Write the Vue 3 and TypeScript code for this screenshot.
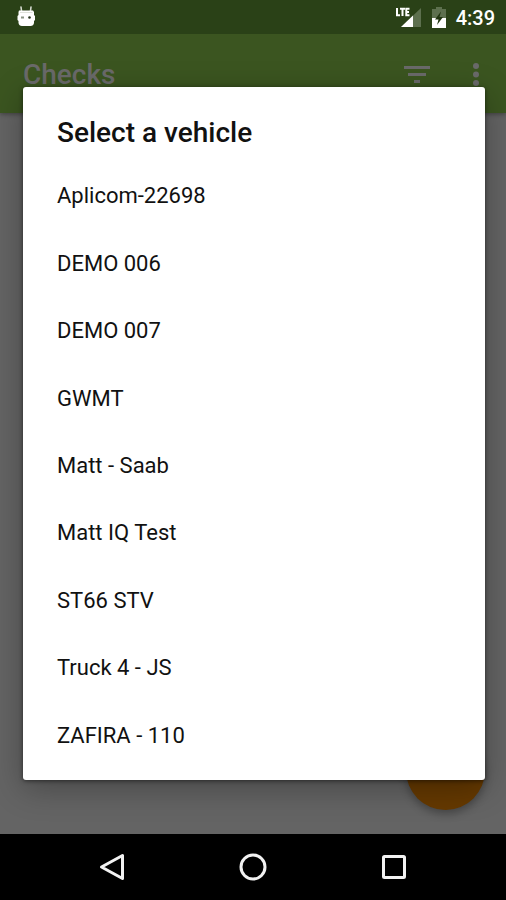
<script setup lang="ts">
import { ref } from 'vue'

const vehicles: string[] = [
  'Aplicom-22698',
  'DEMO 006',
  'DEMO 007',
  'GWMT',
  'Matt - Saab',
  'Matt IQ Test',
  'ST66 STV',
  'Truck 4 - JS',
  'ZAFIRA - 110',
]

const selected = ref<string | null>(null)
</script>

<template>
  <div class="phone">
    <header class="status-bar">
      <svg class="debug-icon" width="20" height="22" viewBox="0 0 20 22" aria-hidden="true">
        <path d="M5 1 L5.500 5 M15 1 L14.500 5" stroke="#d5dacf" stroke-width="1.600" stroke-linecap="round" />
        <path d="M3 4.500 H17 L18 6 V9 L19 10 V14 L18 15 V17 Q17.500 20 14.500 20 H6 Q3 20 2.500 17 V15 L1.500 14 V10 L2.500 9 V6 Z" fill="#fff" />
        <path d="M4 6.500 H16.500" stroke="#dfe2da" stroke-width="1" />
        <path d="M5 11.500 H8" stroke="#8b9484" stroke-width="2" />
        <circle cx="13.500" cy="11.500" r="1.300" fill="#26331b" />
      </svg>
      <div class="status-right">
        <svg width="26" height="22" viewBox="0 0 26 22" aria-hidden="true">
          <path d="M25 2 V21 H5 Z" fill="#5d704e" />
          <path d="M17 9.500 V21 H5 Z" fill="#fff" />
          <path d="M0 1 H14 V11 H0 Z" fill="#2a4117" />
          <path d="M1 2 V9.200 H4 M4 2.800 H9 M6.500 2.800 V10 M13.500 2.800 H10.300 V9.200 H13.500 M10.300 6 H13" fill="none" stroke="#fff" stroke-width="2" />
        </svg>
        <svg width="14" height="22" viewBox="0 0 14 22" aria-hidden="true">
          <path d="M4 1 H10 V3 H14 V22 H0 V3 H4 Z" fill="#5d704e" />
          <path d="M0 12 H14 V22 H0 Z" fill="#fff" />
          <path d="M9 5.500 L3 13.500 H6.500 L5 19 L11 11 H7.500 Z" fill="#20340f" />
        </svg>
        <time class="clock">4:39</time>
      </div>
    </header>

    <div class="screen">
      <div class="app-bar">
        <h1>Checks</h1>
        <button type="button" class="icon-button" aria-label="Filter">
          <svg width="26" height="18" viewBox="0 0 26 18">
            <path d="M0 0 H26 V3 H0 Z M4 7 H22 V10 H4 Z M10 14 H16 V17 H10 Z" fill="#6a6a6a" />
          </svg>
        </button>
        <button type="button" class="icon-button" aria-label="More options">
          <svg width="6" height="24" viewBox="0 0 6 24">
            <circle cx="3" cy="3" r="3" fill="#6a6a6a" />
            <circle cx="3" cy="11.500" r="3" fill="#6a6a6a" />
            <circle cx="3" cy="20" r="3" fill="#6a6a6a" />
          </svg>
        </button>
      </div>
      <button type="button" class="fab" aria-label="Add check"></button>

      <div class="overlay">
        <section class="dialog" role="dialog" aria-modal="true" aria-labelledby="dialog-title">
          <h2 id="dialog-title">Select a vehicle</h2>
          <ul>
            <li v-for="vehicle in vehicles" :key="vehicle">
              <button type="button" @click="selected = vehicle">{{ vehicle }}</button>
            </li>
          </ul>
        </section>
      </div>
    </div>

    <nav class="nav-bar" aria-label="System">
      <button type="button" aria-label="Back">
        <svg width="28" height="28" viewBox="0 0 28 28">
          <path d="M24.500 2.500 V25.500 L3.500 14 Z" fill="none" stroke="#f2f2f2" stroke-width="3" stroke-linejoin="round" />
        </svg>
      </button>
      <button type="button" aria-label="Home">
        <svg width="28" height="28" viewBox="0 0 28 28">
          <circle cx="14" cy="14" r="12" fill="none" stroke="#f2f2f2" stroke-width="3" />
        </svg>
      </button>
      <button type="button" aria-label="Recent apps">
        <svg width="28" height="28" viewBox="0 0 28 28">
          <rect x="3.500" y="3.500" width="21" height="21" rx="1" fill="none" stroke="#f2f2f2" stroke-width="3" />
        </svg>
      </button>
    </nav>
  </div>
</template>

<style>
body {
  margin: 0;
  background: #000;
}
</style>

<style scoped>
.phone {
  display: flex;
  flex-direction: column;
  min-height: 100vh;
  font-family: Roboto, "Liberation Sans", sans-serif;
}

button {
  padding: 0;
  border: 0;
  background: none;
  font: inherit;
  color: inherit;
  cursor: pointer;
}

svg {
  display: block;
}

h1,
h2,
ul {
  margin: 0;
  padding: 0;
}

.status-bar {
  box-sizing: border-box;
  display: flex;
  align-items: center;
  justify-content: space-between;
  height: 34px;
  padding: 0 11px 0 16px;
  background: #2a4117;
}

.status-right {
  display: flex;
  align-items: center;
  gap: 10px;
}

.clock {
  padding-top: 2px;
  color: #fff;
  font-size: 20px;
  font-weight: 500;
  line-height: 24px;
}

.screen {
  position: relative;
  display: flex;
  flex: 1;
  flex-direction: column;
  overflow: hidden;
  background: #646464;
}

.app-bar {
  box-sizing: border-box;
  display: flex;
  align-items: center;
  gap: 43px;
  height: 79px;
  padding: 2px 27px 0 23px;
  background: #3b5520;
  box-shadow: 0 1px 5px rgba(0, 0, 0, 0.4);
}

.app-bar h1 {
  flex: 1;
  color: #6a6a6a;
  font-size: 28px;
  font-weight: 500;
  line-height: 32px;
}

.fab {
  position: absolute;
  right: 21px;
  bottom: 24px;
  width: 79px;
  height: 79px;
  border-radius: 50%;
  background: #653900;
  box-shadow: 0 4px 8px rgba(0, 0, 0, 0.3);
}

.overlay {
  position: absolute;
  inset: 0;
  display: flex;
  align-items: center;
  padding: 0 21px 2px 23px;
}

.dialog {
  box-sizing: border-box;
  flex: 1;
  padding: 30px 0 10px;
  border-radius: 3px;
  background: #fff;
  box-shadow: 0 8px 32px rgba(0, 0, 0, 0.3), 0 1px 4px rgba(0, 0, 0, 0.5);
}

.dialog h2 {
  padding: 0 34px 14px;
  color: #111;
  font-size: 28px;
  font-weight: 500;
  line-height: 32px;
}

ul {
  display: grid;
  grid-auto-rows: 1fr;
  height: 607px;
  list-style: none;
}

li {
  display: flex;
}

li button {
  flex: 1;
  padding: 0 34px;
  color: #111;
  font-size: 22px;
  line-height: 28px;
  text-align: left;
}

.nav-bar {
  display: flex;
  align-items: center;
  justify-content: center;
  gap: 113px;
  height: 66px;
  background: #000;
}
</style>
